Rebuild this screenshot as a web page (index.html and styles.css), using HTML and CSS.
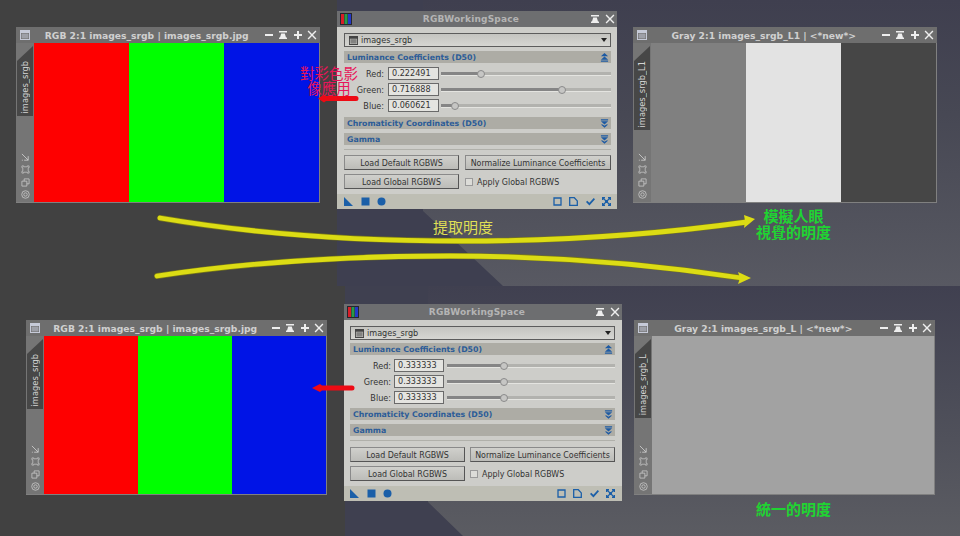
FILE: index.html
```html
<!DOCTYPE html>
<html lang="zh-Hant">
<head>
<meta charset="utf-8">
<title>RGBWorkingSpace</title>
<link rel="stylesheet" href="styles.css">
</head>
<body>
<svg class="defs" width="0" height="0" aria-hidden="true">
  <symbol id="i-min" viewBox="0 0 10 10"><path d="M1 4h8v2H1z"/></symbol>
  <symbol id="i-shade" viewBox="0 0 10 10"><path d="M1 1h8v1.6H1zM3.2 3.4h3.6L8 7.6h1V9H1V7.6h1z"/></symbol>
  <symbol id="i-plus" viewBox="0 0 10 10"><path d="M4 1h2v3h3v2H6v3H4V6H1V4h3z"/></symbol>
  <symbol id="i-close" viewBox="0 0 10 10"><path d="M1.6.6 5 4l3.4-3.4 1 1L6 5l3.4 3.4-1 1L5 6 1.6 9.4l-1-1L4 5 .6 1.6z"/></symbol>
  <symbol id="i-view" viewBox="0 0 10 10"><path fill-rule="evenodd" d="M0 0h10v10H0zM1 3v6h8V3z"/><path d="M1.500 3.500h7v5h-7z" opacity=".55"/></symbol>
  <symbol id="i-expand" viewBox="0 0 10 10"><path d="M1 1l7 7M8 3.500V8H3.500M1 8h1" fill="none" stroke="currentColor" stroke-width="1"/></symbol>
  <symbol id="i-frame" viewBox="0 0 10 10"><path d="M1 1h2v1h4V1h2v2H8v4h1v2H7V8H3v1H1V7h1V3H1z" fill="none" stroke="currentColor" stroke-width=".8"/></symbol>
  <symbol id="i-copy" viewBox="0 0 10 10"><path d="M1 3.500h5.500V9H1zM3.500 3.500V1H9v5.500H6.500" fill="none" stroke="currentColor" stroke-width=".9"/></symbol>
  <symbol id="i-target" viewBox="0 0 10 10"><circle cx="5" cy="5" r="4.200" fill="none" stroke="currentColor" stroke-width=".9"/><circle cx="5" cy="5" r="1.900" fill="none" stroke="currentColor" stroke-width=".9"/></symbol>
  <symbol id="i-up" viewBox="0 0 10 10"><path d="M5 0l4 3.600H1zM5 4l4 3.400H1zM1 8.200h8v1.400H1z"/></symbol>
  <symbol id="i-down" viewBox="0 0 10 10"><path d="M1 .4h8v1.400H1zM1 2.600h8L5 6zM1 6l4 3.600L9 6H7L5 7.600 3 6z"/></symbol>
  <symbol id="i-rgb" viewBox="0 0 12 12"><path fill="#26262e" d="M0 0h12v12H0z"/><path fill="#d81e28" d="M1 1h3v10H1z"/><path fill="#2a9a48" d="M4.500 1h3v10h-3z"/><path fill="#2438c8" d="M8 1h3v10H8z"/></symbol>
  <symbol id="i-tri" viewBox="0 0 9 9"><path d="M0 0l9 9H0z"/></symbol>
  <symbol id="i-sq" viewBox="0 0 9 9"><path d="M.5.5h8v8h-8z"/></symbol>
  <symbol id="i-dot" viewBox="0 0 9 9"><circle cx="4.500" cy="4.500" r="4"/></symbol>
  <symbol id="i-new" viewBox="0 0 9 9"><path d="M1 1h7v7H1z" fill="none" stroke="currentColor" stroke-width="1.300"/></symbol>
  <symbol id="i-doc" viewBox="0 0 9 9"><path d="M.7.7h4.600l3 3.200v4.400H.7z" fill="none" stroke="currentColor" stroke-width="1.300"/></symbol>
  <symbol id="i-check" viewBox="0 0 9 9"><path d="M.6 4.400l2.800 2.800L8.400 1.600" fill="none" stroke="currentColor" stroke-width="1.800"/></symbol>
  <symbol id="i-full" viewBox="0 0 9 9"><path d="M.5.5l8 8M8.500.5l-8 8" fill="none" stroke="currentColor" stroke-width="1.100"/><path d="M0 0h3v1.400H1.400V3H0zM6 0h3v3H7.600V1.400H6zM0 6h1.400v1.600H3V9H0zM7.600 6H9v3H6V7.600h1.600z"/><path d="M3 3h3v3H3z"/></symbol>
</svg>

<div class="desk desk-top"></div>
<div class="desk desk-bottom"></div>

<section class="win win-a">
  <header class="win-title">
    <svg class="win-icon"><use href="#i-view"/></svg>
    <span class="win-name">RGB 2:1 images_srgb | images_srgb.jpg</span>
    <svg class="ctl"><use href="#i-min"/></svg><svg class="ctl"><use href="#i-shade"/></svg><svg class="ctl"><use href="#i-plus"/></svg><svg class="ctl"><use href="#i-close"/></svg>
  </header>
  <div class="win-body">
    <aside class="side">
      <div class="tab"><span>images_srgb</span></div>
      <div class="tools"><svg><use href="#i-expand"/></svg><svg><use href="#i-frame"/></svg><svg><use href="#i-copy"/></svg><svg><use href="#i-target"/></svg></div>
    </aside>
    <div class="image"><div class="stripe red"></div><div class="stripe green"></div><div class="stripe blue"></div></div>
  </div>
</section>

<section class="panel panel-a">
  <header class="panel-title">
    <svg class="panel-logo"><use href="#i-rgb"/></svg>
    <span class="panel-name">RGBWorkingSpace</span>
    <svg class="ctl"><use href="#i-shade"/></svg><svg class="ctl"><use href="#i-close"/></svg>
  </header>
  <div class="panel-body">
    <div class="combo"><svg class="combo-icon"><use href="#i-view"/></svg><span class="combo-text">images_srgb</span><span class="combo-arrow"></span></div>
    <div class="bar bar-lum"><span>Luminance Coefficients (D50)</span><svg><use href="#i-up"/></svg></div>
    <div class="coeffs">
      <div class="coeff"><span class="coeff-label">Red:</span><span class="field">0.222491</span><div class="slider"><div class="fill" style="width:23.5%"></div><span class="thumb" style="left:23.5%"></span></div></div>
      <div class="coeff"><span class="coeff-label">Green:</span><span class="field">0.716888</span><div class="slider"><div class="fill" style="width:71.2%"></div><span class="thumb" style="left:71.2%"></span></div></div>
      <div class="coeff"><span class="coeff-label">Blue:</span><span class="field">0.060621</span><div class="slider"><div class="fill" style="width:8%"></div><span class="thumb" style="left:8%"></span></div></div>
    </div>
    <div class="bar bar-chroma"><span>Chromaticity Coordinates (D50)</span><svg><use href="#i-down"/></svg></div>
    <div class="bar bar-gamma"><span>Gamma</span><svg><use href="#i-down"/></svg></div>
    <div class="sep"></div>
    <div class="actions">
      <button class="btn">Load Default RGBWS</button><button class="btn">Normalize Luminance Coefficients</button>
      <button class="btn">Load Global RGBWS</button><div class="check"><span class="box"></span><span>Apply Global RGBWS</span></div>
    </div>
  </div>
  <footer class="panel-foot">
    <svg><use href="#i-tri"/></svg><svg><use href="#i-sq"/></svg><svg><use href="#i-dot"/></svg>
    <span class="foot-gap"></span>
    <svg><use href="#i-new"/></svg><svg><use href="#i-doc"/></svg><svg><use href="#i-check"/></svg><svg><use href="#i-full"/></svg>
  </footer>
</section>

<section class="win win-c">
  <header class="win-title">
    <svg class="win-icon"><use href="#i-view"/></svg>
    <span class="win-name">Gray 2:1 images_srgb_L1 | &lt;*new*&gt;</span>
    <svg class="ctl"><use href="#i-min"/></svg><svg class="ctl"><use href="#i-shade"/></svg><svg class="ctl"><use href="#i-plus"/></svg><svg class="ctl"><use href="#i-close"/></svg>
  </header>
  <div class="win-body">
    <aside class="side">
      <div class="tab"><span>images_srgb_L1</span></div>
      <div class="tools"><svg><use href="#i-expand"/></svg><svg><use href="#i-frame"/></svg><svg><use href="#i-copy"/></svg><svg><use href="#i-target"/></svg></div>
    </aside>
    <div class="image"><div class="stripe gray-r"></div><div class="stripe gray-g"></div><div class="stripe gray-b"></div></div>
  </div>
</section>

<section class="win win-d">
  <header class="win-title">
    <svg class="win-icon"><use href="#i-view"/></svg>
    <span class="win-name">RGB 2:1 images_srgb | images_srgb.jpg</span>
    <svg class="ctl"><use href="#i-min"/></svg><svg class="ctl"><use href="#i-shade"/></svg><svg class="ctl"><use href="#i-plus"/></svg><svg class="ctl"><use href="#i-close"/></svg>
  </header>
  <div class="win-body">
    <aside class="side">
      <div class="tab"><span>images_srgb</span></div>
      <div class="tools"><svg><use href="#i-expand"/></svg><svg><use href="#i-frame"/></svg><svg><use href="#i-copy"/></svg><svg><use href="#i-target"/></svg></div>
    </aside>
    <div class="image"><div class="stripe red"></div><div class="stripe green"></div><div class="stripe blue"></div></div>
  </div>
</section>

<section class="panel panel-b">
  <header class="panel-title">
    <svg class="panel-logo"><use href="#i-rgb"/></svg>
    <span class="panel-name">RGBWorkingSpace</span>
    <svg class="ctl"><use href="#i-shade"/></svg><svg class="ctl"><use href="#i-close"/></svg>
  </header>
  <div class="panel-body">
    <div class="combo"><svg class="combo-icon"><use href="#i-view"/></svg><span class="combo-text">images_srgb</span><span class="combo-arrow"></span></div>
    <div class="bar bar-lum"><span>Luminance Coefficients (D50)</span><svg><use href="#i-up"/></svg></div>
    <div class="coeffs">
      <div class="coeff"><span class="coeff-label">Red:</span><span class="field">0.333333</span><div class="slider"><div class="fill" style="width:34%"></div><span class="thumb" style="left:34%"></span></div></div>
      <div class="coeff"><span class="coeff-label">Green:</span><span class="field">0.333333</span><div class="slider"><div class="fill" style="width:34%"></div><span class="thumb" style="left:34%"></span></div></div>
      <div class="coeff"><span class="coeff-label">Blue:</span><span class="field">0.333333</span><div class="slider"><div class="fill" style="width:34%"></div><span class="thumb" style="left:34%"></span></div></div>
    </div>
    <div class="bar bar-chroma"><span>Chromaticity Coordinates (D50)</span><svg><use href="#i-down"/></svg></div>
    <div class="bar bar-gamma"><span>Gamma</span><svg><use href="#i-down"/></svg></div>
    <div class="sep"></div>
    <div class="actions">
      <button class="btn">Load Default RGBWS</button><button class="btn">Normalize Luminance Coefficients</button>
      <button class="btn">Load Global RGBWS</button><div class="check"><span class="box"></span><span>Apply Global RGBWS</span></div>
    </div>
  </div>
  <footer class="panel-foot">
    <svg><use href="#i-tri"/></svg><svg><use href="#i-sq"/></svg><svg><use href="#i-dot"/></svg>
    <span class="foot-gap"></span>
    <svg><use href="#i-new"/></svg><svg><use href="#i-doc"/></svg><svg><use href="#i-check"/></svg><svg><use href="#i-full"/></svg>
  </footer>
</section>

<section class="win win-f">
  <header class="win-title">
    <svg class="win-icon"><use href="#i-view"/></svg>
    <span class="win-name">Gray 2:1 images_srgb_L | &lt;*new*&gt;</span>
    <svg class="ctl"><use href="#i-min"/></svg><svg class="ctl"><use href="#i-shade"/></svg><svg class="ctl"><use href="#i-plus"/></svg><svg class="ctl"><use href="#i-close"/></svg>
  </header>
  <div class="win-body">
    <aside class="side">
      <div class="tab"><span>images_srgb_L</span></div>
      <div class="tools"><svg><use href="#i-expand"/></svg><svg><use href="#i-frame"/></svg><svg><use href="#i-copy"/></svg><svg><use href="#i-target"/></svg></div>
    </aside>
    <div class="image"><div class="stripe gray-flat"></div></div>
  </div>
</section>

<svg class="arrows" viewBox="0 0 960 536" aria-hidden="true">
  <g class="arrow-under">
    <path d="M160 218C260 235 360 241 462 241C560 241 660 234 747 222"/>
    <path d="M157 276C250 262 350 256 450 256C550 256 650 264 742 278"/>
  </g>
  <g class="arrow-yellow">
    <path d="M160 218C260 235 360 241 462 241C560 241 660 234 747 222"/>
    <path d="M157 276C250 262 350 256 450 256C550 256 650 264 742 278"/>
  </g>
  <path class="head-yellow" d="M755 219 744 215 745 221 744 228zM751 278 738 272 740 278 738 284z"/>
  <path class="head-red" d="M318 98.500 324 94.500 326 96H356a2.500 2.500 0 0 1 0 5H326L324 102.500z"/>
  <path class="head-red" d="M312 388 320 384 322 385.500H352a2.500 2.500 0 0 1 0 5H322L320 392z"/>
</svg>

<p class="note note-red">對彩色影<br>像應用</p>
<p class="note note-yellow">提取明度</p>
<p class="note note-green note-sim">模擬人眼<br>視覺的明度</p>
<p class="note note-green note-flat">統一的明度</p>
</body>
</html>
```
FILE: styles.css
```css
* { box-sizing: border-box; }
html, body { margin: 0; padding: 0; }
body {
  position: relative;
  width: 960px;
  height: 536px;
  overflow: hidden;
  background: #414141;
  font-family: "DejaVu Sans", sans-serif;
}
.defs { position: absolute; }

/* desktop backdrops */
.desk { position: absolute; }
.desk::before { content: ""; position: absolute; inset: 0; }
.desk-top {
  left: 337px; top: 0; width: 623px; height: 286px;
  background: linear-gradient(180deg, #3f3f4f 0%, #474854 40%, #585962 100%);
}
.desk-top::before {
  background: #3e3f50;
  clip-path: polygon(0 0, 86px 0, 86px 211px, 166px 286px, 0 286px);
}
.desk-bottom {
  left: 345px; top: 286px; width: 615px; height: 250px;
  background: linear-gradient(180deg, #404050 0%, #4a4b57 40%, #5b5c62 100%);
}
.desk-bottom::before {
  background: #3f4050;
  clip-path: polygon(0 0, 83px 0, 83px 216px, 118px 250px, 0 250px);
}

/* image windows */
.win {
  position: absolute;
  display: flex;
  flex-direction: column;
  background: #808080;
  color: #cfcfcf;
}
.win-a { left: 16px; top: 27px; width: 304px; height: 176px; }
.win-c { left: 633px; top: 27px; width: 304px; height: 176px; }
.win-d { left: 26px; top: 320px; width: 301px; height: 175px; }
.win-f { left: 634px; top: 320px; width: 301px; height: 175px; }
.win-title {
  flex: 0 0 16px;
  display: flex;
  align-items: center;
  gap: 4.500px;
  padding: 0 3px 0 4px;
  background: #6e6e6e;
}
.win-icon { width: 10px; height: 10px; fill: #c6cad8; flex: none; }
.win-name {
  flex: 1;
  text-align: center;
  font-size: 9.200px;
  font-weight: bold;
  color: #d0d0d0;
  white-space: nowrap;
}
.ctl { width: 10px; height: 10px; fill: #eeeeee; flex: none; }
.win-body { flex: 1; display: flex; min-height: 0; padding: 0 1px 1px 0; }
.side {
  flex: 0 0 18px;
  display: flex;
  flex-direction: column;
  justify-content: space-between;
  background: #757575;
}
.tab {
  margin: 3px 1px 0;
  width: 16px;
  background: #474747;
  clip-path: polygon(100% 0, 100% 100%, 0 100%, 0 15px);
  display: flex;
  flex-direction: column;
  align-items: center;
  padding: 15px 0 3px;
}
.tab span {
  writing-mode: vertical-rl;
  transform: rotate(180deg);
  font-size: 8.300px;
  color: #d4d4d4;
  white-space: nowrap;
}
.tools {
  display: flex;
  flex-direction: column;
  align-items: center;
  gap: 3.300px;
  padding-bottom: 3px;
  color: #c8c8c8;
}
.tools svg { width: 9px; height: 9px; }
.image { flex: 1; display: flex; }
.stripe { flex: 1; }
.red { background: #fe0000; }
.green { background: #00ff00; }
.blue { background: #0014e6; }
.gray-r { background: #808080; }
.gray-g { background: #e3e3e3; }
.gray-b { background: #464646; }
.gray-flat { background: #a2a2a2; }

/* process panel */
.panel {
  position: absolute;
  display: flex;
  flex-direction: column;
  background: #cdcdc9;
  color: #333333;
  font-family: "DejaVu Sans Condensed", "DejaVu Sans", sans-serif;
  font-stretch: condensed;
  font-size: 9px;
}
.panel-a { left: 337px; top: 11px; width: 280px; height: 198px; }
.panel-b { left: 344px; top: 304px; width: 278px; height: 197px; }
.panel-title {
  flex: 0 0 16px;
  display: flex;
  align-items: center;
  gap: 5px;
  padding: 0 2px 0 3px;
  background: #6d6e70;
}
.panel-logo { width: 12px; height: 12px; flex: none; }
.panel-name {
  flex: 1;
  text-align: center;
  font-family: "DejaVu Sans", sans-serif;
  font-stretch: normal;
  font-size: 9px;
  font-weight: bold;
  letter-spacing: .2px;
  color: #b4b4b4;
}
.panel-body { flex: 1; display: flex; flex-direction: column; padding: 6px 6px 0 7px; }
.panel-b .panel-body { padding: 6px 7px 0 6px; }
.combo {
  flex: 0 0 14px;
  display: flex;
  align-items: center;
  gap: 3px;
  padding: 0 3px 0 4px;
  border: 1px solid #5c5c5c;
  background: linear-gradient(180deg, #c4c4c0, #d6d6d2);
  font-size: 9px;
}
.combo-icon { width: 9px; height: 9px; fill: #444; flex: none; }
.combo-text { flex: 1; }
.combo-arrow {
  width: 0; height: 0;
  border-left: 3.500px solid transparent;
  border-right: 3.500px solid transparent;
  border-top: 4px solid #222;
}
.bar {
  flex: 0 0 12px;
  display: flex;
  align-items: center;
  justify-content: space-between;
  padding: 0 2px 0 3px;
  background: #adaca5;
  color: #2c5c98;
  font-family: "DejaVu Sans", sans-serif;
  font-stretch: normal;
  font-size: 7.800px;
  font-weight: bold;
}
.bar svg { width: 9px; height: 9px; fill: #1d5aa3; }
.bar-lum { margin-top: 4px; }
.panel-b .bar-lum { margin-top: 3px; }
.bar-chroma { margin-top: 5px; }
.panel-b .bar-chroma { margin-top: 4px; }
.bar-gamma { margin-top: 4px; }
.coeffs { display: flex; flex-direction: column; gap: 3px; margin-top: 4px; }
.coeff { height: 13px; display: flex; align-items: center; }
.coeff-label { width: 40px; margin-right: 4px; text-align: right; }
.field {
  width: 51px;
  height: 13px;
  margin-right: 2px;
  padding: 0 3px;
  border: 1px solid #6a6a6a;
  background: #e4e4e0;
  font-size: 9px;
  line-height: 11px;
}
.panel-b .coeff-label { width: 41px; margin-right: 3px; }
.panel-b .field { width: 50px; margin-right: 3px; }
.slider {
  position: relative;
  flex: 1;
  height: 4px;
  background: #b2b2ae;
  border-bottom: 1px solid #e4e4e0;
}
.fill { height: 3px; background: #858585; }
.thumb {
  position: absolute;
  top: -2px;
  width: 8px;
  height: 8px;
  margin-left: -4px;
  border-radius: 50%;
  border: 1px solid #8a8a8a;
  background: #c6c6c4;
}
.sep { height: 1px; margin-top: 4px; background: #b0b0aa; }
.actions {
  display: grid;
  grid-template-columns: 115px minmax(0, 1fr);
  grid-auto-rows: 15px;
  column-gap: 6px;
  row-gap: 4px;
  margin-top: 5px;
}
.panel-b .actions { margin-top: 6px; column-gap: 5px; }
.btn {
  margin: 0;
  padding: 0;
  min-width: 0;
  border: 1px solid #5e5e5e;
  border-color: #8a8a8a #555 #555 #8a8a8a;
  background: linear-gradient(180deg, #d0d0cc, #bcbcb8);
  color: #333333;
  font-family: inherit;
  font-stretch: condensed;
  font-size: 8.800px;
  white-space: nowrap;
}
.check { display: flex; align-items: center; gap: 4px; font-size: 8.800px; }
.box { width: 8px; height: 8px; border: 1px solid #9a9a9a; background: #dcdcd8; }
.panel-foot {
  flex: 0 0 15px;
  display: flex;
  align-items: center;
  gap: 7.500px;
  padding: 0 6px 0 7px;
  background: #bebeb4;
  color: #1b5fa8;
  fill: #1b5fa8;
}
.panel-foot svg { width: 9px; height: 9px; flex: none; }
.panel-b .panel-foot { padding: 0 7px 0 6px; }
.foot-gap { flex: 1; }

/* annotations */
.arrows { position: absolute; left: 0; top: 0; width: 960px; height: 536px; }
.arrow-under path, .arrow-yellow path { fill: none; stroke-linecap: round; }
.arrow-under path { stroke: #77771a; stroke-width: 6px; }
.arrow-yellow path { stroke: #dcdc14; stroke-width: 4.800px; }
.head-yellow { fill: #dcdc14; }
.head-red { fill: #ee0a14; }
.note {
  position: absolute;
  margin: 0;
  font-family: "Noto Sans CJK TC", sans-serif;
  font-size: 15px;
  line-height: 15px;
  text-align: center;
  white-space: nowrap;
}
.note-red { left: 300px; top: 66px; font-size: 14.500px; line-height: 14.500px; color: #e8155a; }
.note-yellow { left: 433px; top: 219px; color: #dfdf55; }
.note-green { color: #1fd432; font-weight: bold; }
.note-sim { left: 756px; top: 208px; line-height: 15.500px; }
.note-flat { left: 756px; top: 501px; }
```
